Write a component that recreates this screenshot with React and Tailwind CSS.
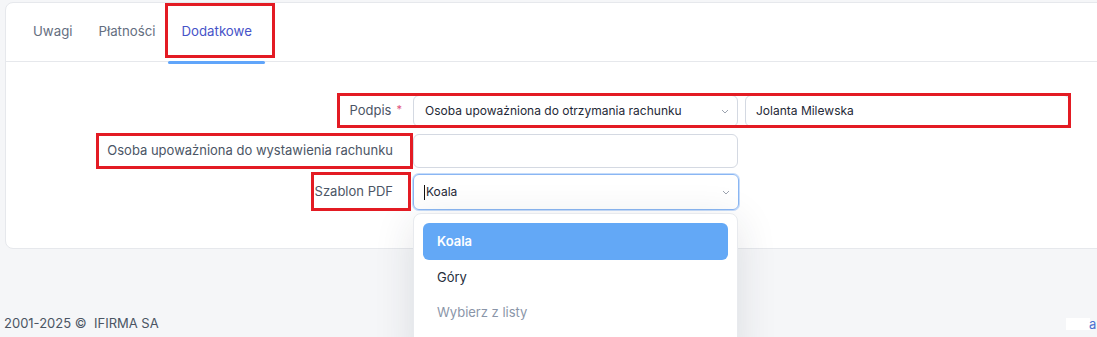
import React from "react";

const Chevron = () => (
  <svg width="8" height="5" viewBox="0 0 8 5" className="shrink-0">
    <path d="M1 1l3 3 3-3" fill="none" stroke="#9ca3af" strokeWidth="1" />
  </svg>
);

const tabs = ["Uwagi", "Płatności", "Dodatkowe"];

export default function App() {
  return (
    <div
      className="relative w-[1097px] h-[337px] overflow-hidden bg-[#f5f6f8] text-[13px]"
      style={{ fontFamily: "Inter, 'Noto Sans', sans-serif" }}
    >
      <div className="pl-[5px] pt-[2px]">
        <div className="w-[1110px] h-[247px] rounded-lg border border-[#e6e8ec] bg-white">
          {/* tabs */}
          <div className="flex h-[59px] pl-[14px] border-b border-[#e6e8ec]">
            {tabs.map((t, i) => (
              <div
                key={t}
                className={`relative flex items-center px-[13px] text-[13.25px] ${
                  i === 2 ? "text-[#4753c8]" : "text-[#646e80]"
                }`}
              >
                {t}
                {i === 2 && (
                  <span className="absolute left-0 right-0 bottom-[-3px] h-[3px] rounded-full bg-[#60a5fa]" />
                )}
              </div>
            ))}
          </div>

          {/* form */}
          <div className="pt-[33px]">
            <div className="flex h-[32px] items-center">
              <div className="w-[399px] flex justify-end items-center pr-[3px] text-[#4b5565]">
                Podpis<span className="ml-[5px] text-[#e0527a] text-[11px] -mt-[4px]">*</span>
              </div>
              <div className="ml-[8px] w-[325px] h-full flex items-center justify-between pl-[11px] pr-[8px] rounded-md border border-[#d4d9e2] text-[12px] text-[#1f2937]">
                <span>Osoba upoważniona do otrzymania rachunku</span>
                <Chevron />
              </div>
              <div className="ml-[7px] w-[325px] h-full flex items-center pl-[10px] rounded-md border border-[#d4d9e2] text-[12px] text-[#1f2937]">
                Jolanta Milewska
              </div>
            </div>

            <div className="mt-[7px] flex h-[34px] items-center">
              <div className="w-[399px] text-right pr-[12px] text-[#4b5565]">
                Osoba upoważniona do wystawienia rachunku
              </div>
              <div className="ml-[8px] w-[325px] h-full rounded-md border border-[#d4d9e2]" />
            </div>

            <div className="mt-[6px] flex h-[36px] items-center">
              <div className="w-[399px] text-right pr-[12px] text-[#4b5565]">Szablon PDF</div>
              <div className="ml-[8px] w-[326px] h-full flex items-center justify-between pl-[10px] pr-[8px] rounded-md border border-[#8ab6f3] shadow-[0_0_0_1px_#c6dcfa] text-[12px] text-[#1f2937]">
                <span className="flex items-center">
                  <span className="w-px h-[15px] bg-[#111] mr-[1px]" />
                  Koala
                </span>
                <Chevron />
              </div>
            </div>
          </div>
        </div>
      </div>

      <div className="pl-[4px] mt-[66px] text-[13px] leading-4 text-[#4b5563]">
        2001-2025 ©&nbsp; IFIRMA SA
      </div>

      {/* dropdown */}
      <div className="absolute left-[413px] top-[213px] w-[325px] h-[150px] rounded-lg border border-[#e8eaee] bg-white shadow-[0_8px_40px_rgba(30,40,60,0.12)] pt-[9px] px-[9px]">
        <div className="h-[37px] rounded-md bg-[#63a8f6] flex items-center pl-[14px] text-white font-semibold">
          Koala
        </div>
        <div className="h-[36px] flex items-center pl-[14px] text-[#262e3d]">Góry</div>
        <div className="h-[34px] flex items-center pl-[14px] text-[#8a95a8]">Wybierz z listy</div>
      </div>

      {/* right footer fragment */}
      <div className="absolute left-[1066px] top-[318px] w-[24px] h-[12px] bg-white" />
      <div className="absolute left-[1089px] top-[315px] text-[13px] text-[#4b6fd0]">a</div>

      {/* annotation boxes */}
      <div className="absolute left-[165px] top-[3px] w-[110px] h-[55px] border-[3px] border-[#e31b23]" />
      <div className="absolute left-[337px] top-[93px] w-[734px] h-[35px] border-[3px] border-[#e31b23]" />
      <div className="absolute left-[96px] top-[133px] w-[317px] h-[36px] border-[3px] border-[#e31b23]" />
      <div className="absolute left-[311px] top-[172px] w-[100px] h-[39px] border-[3px] border-[#e31b23]" />
    </div>
  );
}
